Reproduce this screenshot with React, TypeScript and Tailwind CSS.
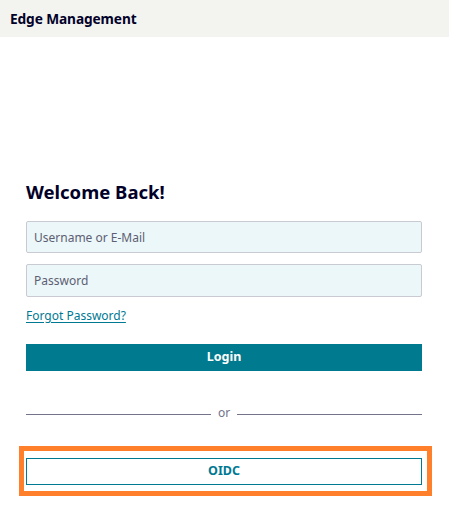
import { useState } from 'react';

export default function App() {
  const [username, setUsername] = useState('');
  const [password, setPassword] = useState('');

  return (
    <div className="min-h-screen bg-white text-[#000028]" style={{ fontFamily: '"Noto Sans", "Open Sans", sans-serif' }}>
      {/* Header */}
      <header className="h-[37px] bg-[#f3f3f0] flex items-center px-[10px]">
        <span className="text-[13.7px] font-bold leading-none tracking-[-0.1px]">Edge Management</span>
      </header>

      {/* Login form */}
      <main className="pl-[26px] pr-[27px] pt-[143px]">
        <h1 className="text-[18.5px] font-bold leading-[24px]">Welcome Back!</h1>

        <input
          value={username}
          onChange={(e) => setUsername(e.target.value)}
          placeholder="Username or E-Mail"
          className="mt-[17px] block w-full h-[32px] px-[7px] text-[12px] bg-[#ebf7f8] border border-[#cacad2] rounded-[2px] placeholder:text-[#5e5e74] outline-none"
        />
        <input
          type="password"
          value={password}
          onChange={(e) => setPassword(e.target.value)}
          placeholder="Password"
          className="mt-[11px] block w-full h-[33px] px-[7px] text-[12px] bg-[#ebf7f8] border border-[#cacad2] rounded-[2px] placeholder:text-[#5e5e74] outline-none"
        />

        <a href="#" className="mt-[10px] inline-block text-[12px] leading-[17px] text-[#007993] underline underline-offset-2">
          Forgot Password?
        </a>

        <button className="mt-[18px] block w-full h-[27px] bg-[#007a8f] text-white text-[12.5px] font-bold">
          Login
        </button>

        <div className="mt-[35px] h-[16px] flex items-center gap-[7px]">
          <div className="flex-1 h-px bg-[#737389]" />
          <span className="text-[12px] leading-none text-[#737389] -mt-[2px]">or</span>
          <div className="flex-1 h-px bg-[#737389]" />
        </div>

        <div className="relative mt-[36px]">
          <button className="block w-full h-[27px] border border-[#007993] text-[#007993] text-[12.5px] font-bold">
            OIDC
          </button>
          {/* highlight annotation */}
          <div className="absolute -left-[7px] -right-[10px] -top-[12px] -bottom-[11px] border-[5px] border-[#ff7f2a] pointer-events-none" />
        </div>
      </main>
    </div>
  );
}
